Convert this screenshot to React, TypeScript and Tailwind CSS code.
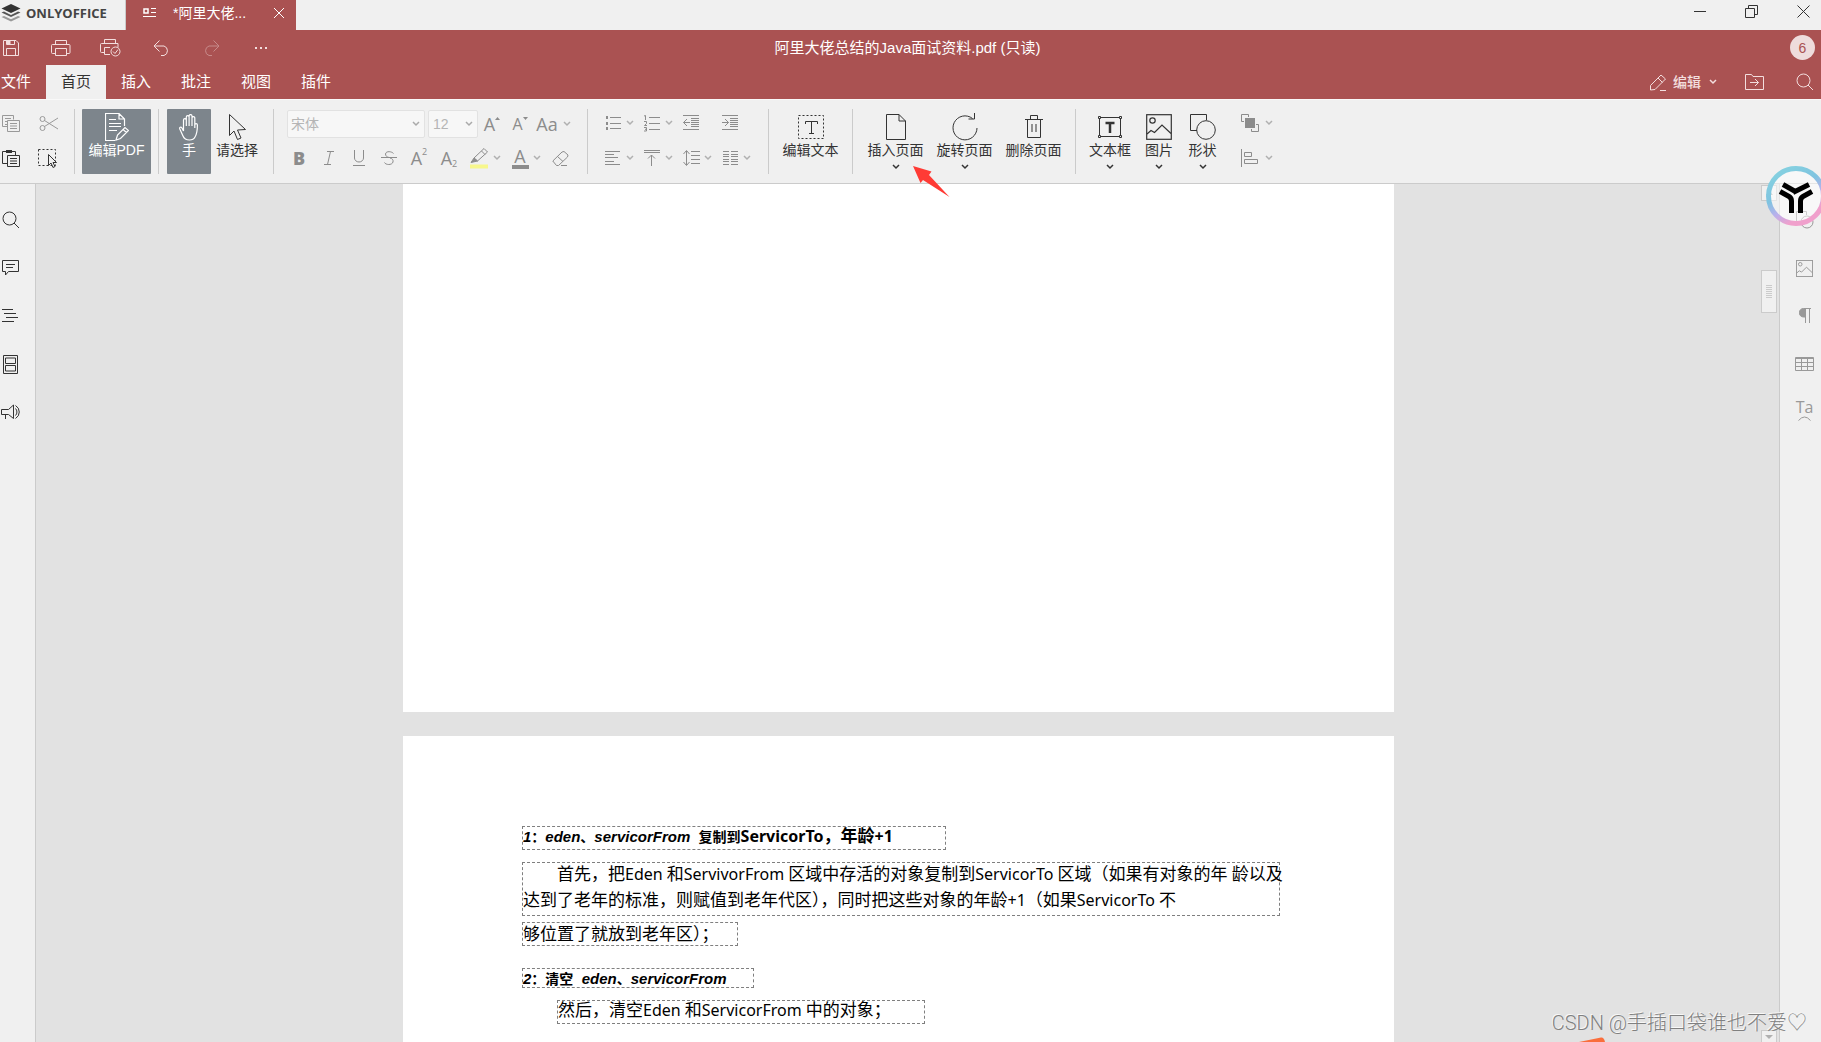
import React from "react";

type Kids = { children?: React.ReactNode };

function Svg({ w, h, children, sw = 1, className = "" }: Kids & { w: number; h: number; sw?: number; className?: string }) {
  return (
    <svg width={w} height={h} viewBox={`0 0 ${w} ${h}`} fill="none" stroke="currentColor" strokeWidth={sw} className={`shrink-0 ${className}`} aria-hidden="true">
      {children}
    </svg>
  );
}

const Chevron = ({ className = "" }: { className?: string }) => (
  <Svg w={8} h={6} sw={1.5} className={className}>
    <path d="M1 1l3 3 3-3" />
  </Svg>
);

const SearchIcon = () => (
  <Svg w={18} h={18}>
    <circle cx="7.5" cy="7.5" r="6.5" />
    <path d="M12 12l5 5" />
  </Svg>
);

const PictureIcon = ({ size = 26 }: { size?: number }) => (
  <svg width={size} height={size} viewBox="0 0 26 26" fill="none" stroke="currentColor" strokeWidth={size > 20 ? 1.2 : 1.5} aria-hidden="true">
    <rect x="0.7" y="0.7" width="24.6" height="24.6" />
    <circle cx="6.5" cy="6.5" r="2.7" />
    <path d="M1 20l4-3.500 3.500 2L16 11l9 8.500" />
  </svg>
);

function IconButton({ label, width = "w-5", children }: Kids & { label: string; width?: string }) {
  return (
    <button type="button" aria-label={label} className={`flex h-7 shrink-0 items-center justify-center ${width}`}>
      {children}
    </button>
  );
}

function ArrowButton({ label }: { label: string }) {
  return (
    <IconButton label={label} width="w-[14px]">
      <Chevron className="text-[#b0b0b0]" />
    </IconButton>
  );
}

function BigButton({ label, icon, active, arrow, width }: { label: string; icon: React.ReactNode; active?: boolean; arrow?: boolean; width: string }) {
  return (
    <button
      type="button"
      aria-pressed={active}
      className={`flex h-[65px] shrink-0 flex-col items-center pt-1 text-sm ${width} ${active ? "rounded-[1px] bg-[#7d858c] text-white" : "text-[#333]"}`}
    >
      <span className="flex h-7 items-center">{icon}</span>
      <span className="h-5 whitespace-nowrap leading-[19px]">{label}</span>
      {arrow && <Chevron className="mt-[3px]" />}
    </button>
  );
}

const Separator = () => <div className="h-[65px] w-px shrink-0 bg-[#cbcbcb]" />;

const PrintShape = () => <path d="M4.500 4V0.500H15.500V4M4.500 13.500H1.500a1 1 0 0 1-1-1V5.500a1 1 0 0 1 1-1H18a1 1 0 0 1 1 1v7a1 1 0 0 1-1 1H15.500M4.500 8.500H15.500V15.500H4.500z" />;

function TitleTabs() {
  return (
    <div className="flex h-[30px] bg-[#f0f0f0]">
      <div className="flex w-[126px] items-center border-r border-[#cbcbcb] pb-1">
        <svg width="20" height="18" viewBox="0 0 20 18" className="ml-[1px] shrink-0" aria-hidden="true">
          <path d="M10 0L19.500 4.500 10 9 0.500 4.500z" fill="#333" />
          <path d="M0.500 8.500L3 7.500 10 11l7-3.500 2.500 1L10 13z" fill="#555" />
          <path d="M0.500 13L3 12 10 15.300 17 12l2.500 1L10 17.500z" fill="#999" />
        </svg>
        <span className="ml-[5px] font-['Open_Sans'] text-[13px] font-bold leading-5 text-[#444]">ONLYOFFICE</span>
      </div>
      <div className="flex w-[170px] items-center bg-[#aa5252] pb-[5px] pl-[17px] pr-3 text-white">
        <Svg w={13} h={10}>
          <rect x="1" y="1" width="4" height="4" strokeWidth="1.500" />
          <path d="M8 0.500h5M8 4.500h5M0 8.500h13" />
        </Svg>
        <span className="ml-[17px] flex-1 text-sm leading-5">*阿里大佬...</span>
        <button type="button" aria-label="关闭标签">
          <Svg w={10} h={10}>
            <path d="M0 0l10 10M10 0L0 10" />
          </Svg>
        </button>
      </div>
      <div className="ml-auto flex gap-[39px] pr-[11px] pt-[5px] text-[#333]">
        <button type="button" aria-label="最小化" className="h-3">
          <Svg w={12} h={12}><path d="M0 6.500h12" /></Svg>
        </button>
        <button type="button" aria-label="还原" className="h-3">
          <Svg w={13} h={13}><path d="M0.500 3.500h9v9h-9zM3.500 3.500v-3h9v9h-3" /></Svg>
        </button>
        <button type="button" aria-label="关闭" className="h-3">
          <Svg w={13} h={13}><path d="M0.500 0.500l12 12M12.500 0.500l-12 12" /></Svg>
        </button>
      </div>
    </div>
  );
}

function QuickBar() {
  const quick = [
    { label: "保存", icon: <Svg w={16} h={16}><path d="M0.500 0.500H13L15.500 3V15.500H0.500zM3.500 15V8.500h9V15M3.500 0.500v4h8v-4" /><path d="M4 1h3v3H4z" fill="currentColor" /></Svg> },
    { label: "打印", icon: <Svg w={20} h={16}><PrintShape /></Svg> },
    { label: "快速打印", icon: <Svg w={22} h={18}><path d="M4.500 4V0.500H15.500V4M4.500 13.500H1.500a1 1 0 0 1-1-1V5.500a1 1 0 0 1 1-1H18v4M10 8.500H4.500V15.500H10" /><circle cx="15.500" cy="12.500" r="4.500" /><path d="M13 12.500l2 2 3-4" /></Svg> },
    { label: "撤销", icon: <Svg w={17} h={16}><path d="M6.500 0.500L1 6l5.500 5.500M1 6h10a5 5 0 0 1 0 9.500H8" /></Svg> },
    { label: "重做", icon: <Svg w={17} h={16} className="opacity-40"><path d="M10.500 0.500L16 6l-5.500 5.500M16 6H6a5 5 0 0 0 0 9.500h3" /></Svg> },
    { label: "更多", icon: <Svg w={12} h={2} sw={2}><path d="M0 1h2M5 1h2M10 1h2" /></Svg> },
  ];
  return (
    <div className="grid h-[35px] grid-cols-[1fr_auto_1fr] items-center pr-1.5">
      <div className="flex gap-7 text-[#f3dede]">
        {quick.map((q) => (
          <button key={q.label} type="button" aria-label={q.label} className="flex h-5 w-[22px] items-center justify-center">{q.icon}</button>
        ))}
      </div>
      <h1 className="text-[15px] leading-6 text-white">阿里大佬总结的Java面试资料.pdf (只读)</h1>
      <div className="ml-auto flex size-[25px] items-center justify-center rounded-full bg-[#eedcdc] text-sm leading-5 text-[#aa5252]">6</div>
    </div>
  );
}

function MenuBar() {
  return (
    <div className="flex h-[34px] text-[15px] leading-6 text-white">
      <button type="button" className="w-[46px] pr-[15px] text-right">文件</button>
      <button type="button" className="w-[60px] bg-[#f0f0f0] text-[#333]">首页</button>
      {["插入", "批注", "视图", "插件"].map((t) => (
        <button key={t} type="button" className="w-[60px]">{t}</button>
      ))}
      <div className="ml-auto flex items-center pr-[7px] text-[#f3dede]">
        <button type="button" className="flex items-center text-sm font-medium">
          <Svg w={17} h={17} className="mr-1.5">
            <path d="M0.500 11.500L11 1l4.500 4L5 15.500l-4.500 0.500zM8 4l4.500 4.500M10 16.500h6" />
          </Svg>
          编辑
          <Chevron className="ml-2" />
        </button>
        <button type="button" aria-label="打开文件位置" className="ml-7">
          <Svg w={19} h={16}>
            <path d="M0.500 0.500h6l1.500 2h10.500v13H0.500zM5 8.500h8.500M10 5l3.500 3.500L10 12" />
          </Svg>
        </button>
        <button type="button" aria-label="搜索" className="ml-8"><SearchIcon /></button>
      </div>
    </div>
  );
}

const rowsClass = "flex h-[65px] shrink-0 flex-col gap-[7px] text-[#8c8c8c]";

function ClipboardGroup() {
  return (
    <div className="grid h-[65px] w-[74px] shrink-0 grid-cols-[22px_24px] content-start gap-x-[14px] gap-y-[7px] text-[#333]">
      <IconButton label="复制" width="w-[22px] text-[#999]">
        <Svg w={18} h={17}><path d="M5 11.500H0.500V0.500h11v4M3 3.500h6M3 6.500h2.500M3 9.500h2M5.500 5.500h12v11h-12zM8 8.500h7M8 11h7M8 13.500h7" /></Svg>
      </IconButton>
      <IconButton label="剪切" width="w-6 text-[#999]">
        <Svg w={19} h={15}><circle cx="3.500" cy="3" r="2.500" /><circle cx="3.500" cy="12" r="2.500" /><path d="M5.500 4.500L19 13M5.500 10.500L19 2" /></Svg>
      </IconButton>
      <IconButton label="粘贴" width="w-[22px]">
        <Svg w={18} h={17}><path d="M5 13.500H0.500V1.500h13v4M5.500 5.500h12v11h-12zM8 8.500h7M8 11h7M8 13.500h7" /><path d="M4 1.500h6" strokeWidth="3" /></Svg>
      </IconButton>
      <IconButton label="全选" width="w-6">
        <Svg w={20} h={19}>
          <path d="M0.500 0.500h17v16h-17z" strokeDasharray="2 2" />
          <path d="M10.500 5.500v11l2.500-2.500 2 4.500 2-1-2-4h3.500z" fill="#f0f0f0" />
        </Svg>
      </IconButton>
    </div>
  );
}

function FontGroup() {
  return (
    <div className={`${rowsClass} ml-[10px] w-[303px]`}>
      <div className="flex h-7 items-center pl-[3px] pt-[2px]">
        <div className="relative">
          <select aria-label="字体" className="h-7 w-[138px] appearance-none rounded-[2px] border border-[#e2e2e2] bg-[#f7f7f7] px-[3px] text-sm text-[#b5b5b5]">
            <option>宋体</option>
          </select>
          <Chevron className="pointer-events-none absolute right-[5px] top-[11px] text-[#aaa]" />
        </div>
        <div className="relative ml-[3px]">
          <select aria-label="字号" className="h-7 w-[50px] appearance-none rounded-[2px] border border-[#e2e2e2] bg-[#f7f7f7] px-1 text-sm text-[#b5b5b5]">
            <option>12</option>
          </select>
          <Chevron className="pointer-events-none absolute right-[5px] top-[11px] text-[#aaa]" />
        </div>
        <IconButton label="增大字号" width="w-7">
          <span className="font-['Open_Sans'] text-lg leading-5">A</span>
          <Svg w={5} h={3} className="mb-3"><path d="M0 3L2.500 0 5 3z" fill="currentColor" stroke="none" /></Svg>
        </IconButton>
        <IconButton label="减小字号" width="w-7">
          <span className="font-['Open_Sans'] text-base leading-5">A</span>
          <Svg w={5} h={3} className="mb-3"><path d="M0 0L2.500 3 5 0z" fill="currentColor" stroke="none" /></Svg>
        </IconButton>
        <IconButton label="更改大小写" width="w-[26px]"><span className="font-['Open_Sans'] text-lg leading-5">Aa</span></IconButton>
        <ArrowButton label="大小写选项" />
      </div>
      <div className="flex h-7 items-center">
        <IconButton label="加粗" width="w-[30px]"><span className="font-['Open_Sans'] text-lg font-extrabold leading-5">B</span></IconButton>
        <IconButton label="斜体" width="w-[30px]"><Svg w={10} h={14}><path d="M3 0.500h7M0 13.500h7M6.500 0.500l-3 13" /></Svg></IconButton>
        <IconButton label="下划线" width="w-[30px]"><Svg w={12} h={16}><path d="M1.500 0v8a4.500 4 0 0 0 9 0V0M0 15.500h12" /></Svg></IconButton>
        <IconButton label="删除线" width="w-[30px]"><Svg w={16} h={14}><path d="M12.500 2.500C11 0.500 5 -0.500 4.500 3c0 2 1.500 3 3.500 3.500M9 7c2 0.500 3.500 1.500 3 4-1 3.500-7.500 3-8.500 0.500M0 6.500h16" /></Svg></IconButton>
        <IconButton label="上标" width="w-[30px]"><span className="font-['Open_Sans'] text-lg leading-5">A</span><span className="mb-3 font-['Open_Sans'] text-[9px] leading-3">2</span></IconButton>
        <IconButton label="下标" width="w-[30px]"><span className="font-['Open_Sans'] text-lg leading-5">A</span><span className="mt-3 font-['Open_Sans'] text-[9px] leading-3">2</span></IconButton>
        <IconButton label="突出显示颜色" width="ml-[6px] w-5">
          <Svg w={20} h={22}>
            <path d="M4 11L14 1.500l3.500 3.500L7.500 14zM11.500 4l3.500 3.500" />
            <path d="M4 11l3.500 3L1 15.500z" fill="currentColor" />
            <path d="M0 19.500h18" stroke="#f7f78c" strokeWidth="4" />
          </Svg>
        </IconButton>
        <ArrowButton label="突出显示选项" />
        <IconButton label="字体颜色" width="ml-[6px] w-5">
          <span className="flex w-[17px] flex-col items-center border-b-4 border-[#8c8c8c] font-['Open_Sans'] text-lg leading-[18px]">A</span>
        </IconButton>
        <ArrowButton label="字体颜色选项" />
        <IconButton label="清除样式" width="ml-1 w-6">
          <Svg w={17} h={15}><path d="M0.800 10L10 1l2-0.500L16 4l-0.500 2-9 8.500H4.500zM5.500 5.500l5.500 5M9 14.500h6" /></Svg>
        </IconButton>
      </div>
    </div>
  );
}

function ParagraphGroup() {
  const items = [
    { label: "项目符号", arrow: true, icon: <Svg w={16} h={16}><path d="M5 2.500h11M5 8.500h11M5 13.500h11" /><path d="M1 2.500h2M1 8.500h2M1 13.500h2" strokeWidth="3" /></Svg> },
    { label: "编号", arrow: true, icon: <Svg w={16} h={17}><path d="M5 2.500h11M5 8.500h11M5 14.500h11M0 1l1.500-.5V5M0 6.500h2.500v2L0.500 10.500H3M0 12.500h2.500v3.500H0M1 14.300h1.500" /></Svg> },
    { label: "减少缩进", icon: <Svg w={16} h={16}><path d="M0 0.500h16M8 3.500h8M8 5.500h8M8 7.500h8M8 9.500h8M8 11.500h8M0 14.500h16M0.500 7.500H7M4 4L0.500 7.500 4 11" /></Svg> },
    { label: "增加缩进", icon: <Svg w={16} h={16}><path d="M0 0.500h16M8 3.500h8M8 5.500h8M8 7.500h8M8 9.500h8M8 11.500h8M0 14.500h16M0 7.500h6.500M3 4l3.500 3.500L3 11" /></Svg> },
    { label: "水平对齐", arrow: true, icon: <Svg w={16} h={14}><path d="M0 0.500h15M0 3.500h9M0 6.500h13M0 10.500h9M0 13.500h15" /></Svg> },
    { label: "垂直对齐", arrow: true, icon: <Svg w={16} h={16}><path d="M0 0.500h16M0 2.500h16M7.500 16V5M4 8.500L7.500 5 11 8.500" /></Svg> },
    { label: "行间距", arrow: true, icon: <Svg w={17} h={16}><path d="M3.500 1v14M0.500 4l3-3.500 3 3.500M0.500 12l3 3.500 3-3.500M8 1.500h9M8 5.500h9M8 9.500h9M8 13.500h9" /></Svg> },
    { label: "分栏", arrow: true, icon: <Svg w={15} h={14}><path d="M0 0.500h6M0 3.500h6M0 5.500h6M0 8.500h6M0 10.500h6M0 13.500h6M8 0.500h7M8 3.500h7M8 5.500h7M8 8.500h7M8 10.500h7M8 13.500h7" /></Svg> },
  ];
  return (
    <div className="ml-[15px] grid h-[65px] w-[165px] shrink-0 grid-cols-[39px_39px_39px_39px] content-start gap-y-[7px] text-[#8c8c8c]">
      {items.map((it) => (
        <div key={it.label} className="flex">
          <IconButton label={it.label}>{it.icon}</IconButton>
          {it.arrow && <ArrowButton label={`${it.label}选项`} />}
        </div>
      ))}
    </div>
  );
}

function Toolbar() {
  return (
    <div className="flex h-[85px] shrink-0 border-b border-t border-b-[#cbcbcb] border-t-[#f9f9f9] bg-[#f0f0f0] pt-[9px]">
      <ClipboardGroup />
      <Separator />
      <div className="px-[7px]">
        <BigButton
          active
          label="编辑PDF"
          width="w-[69px]"
          icon={<Svg w={24} h={28} sw={1.2}><path d="M10 27.500H0.500V0.500H14l5.500 5.500v7M14 0.500V6h5.500M4 6.500h7M4 10.500h12M4 13.500h12M4 17.500h8M11 27l1.500-5L20 14.500l3.500 3L15.500 25.500zM18 16.500l3.500 3" /></Svg>}
        />
      </div>
      <Separator />
      <div className="flex gap-[1px] pl-2 pr-[11px]">
        <BigButton
          active
          label="手"
          width="w-[44px]"
          icon={<Svg w={20} h={27} sw={1.2}><path d="M4.500 15V6a1.400 1.400 0 0 1 2.800 0v6M7.300 12V3a1.400 1.400 0 0 1 2.800 0v9M10.100 12V2a1.400 1.400 0 0 1 2.900 0v10M13 12V4a1.400 1.400 0 0 1 2.800 0v10M15.800 14v-3a1.300 1.300 0 0 1 2.600 0c0 5-0.500 9-2.400 12-1 2-3 3-5.500 3-3.500 0-5.500-1.500-6.500-4L0.800 15c-.6-1.700 1.200-2.500 2-1.200L4.500 17v-2" /></Svg>}
        />
        <BigButton
          label="请选择"
          width="w-[50px]"
          icon={<Svg w={18} h={28}><path d="M1.500 1.500v21l4.500-4.500 3.500 8.500 3.500-1.500-3.500-8 8-0.500z" /></Svg>}
        />
      </div>
      <Separator />
      <FontGroup />
      <Separator />
      <ParagraphGroup />
      <Separator />
      <div className="px-[11px]">
        <BigButton
          label="编辑文本"
          width="w-[61px]"
          icon={<Svg w={26} h={24}><path d="M0.500 0.500h25v23h-25z" strokeDasharray="2 2" /><path d="M7.500 9V6.500h12V9M13.500 6.500v12M11 18.500h5" /></Svg>}
        />
      </div>
      <Separator />
      <div className="flex gap-2 pl-3 pr-[11px]">
        <BigButton arrow label="插入页面" width="w-[61px]" icon={<Svg w={20} h={26}><path d="M0.500 0.500H13L19.500 7V25.500H0.500zM13 0.500V7h6.500" /></Svg>} />
        <BigButton arrow label="旋转页面" width="w-[61px]" icon={<Svg w={26} h={28}><path d="M25 15a12 12 0 1 1-4.500-9.500M22.500 0v6h-6" /></Svg>} />
        <BigButton label="删除页面" width="w-[61px]" icon={<Svg w={18} h={24}><path d="M0 4.500h18M5.500 4.500v-4h7v4M2.500 4.500v18h13v-18M7 9v8M11 9v8" /></Svg>} />
      </div>
      <Separator />
      <div className="flex pl-[9px]">
        <BigButton
          arrow
          label="文本框"
          width="w-[50px]"
          icon={<Svg w={24} h={24}><path d="M1.500 2.500h21v19h-21z" /><path d="M0.500 1.500h2v2h-2zM21.500 1.500h2v2h-2zM0.500 20.500h2v2h-2zM21.500 20.500h2v2h-2z" fill="#f0f0f0" /><path d="M7.500 8h9M12 8v10" strokeWidth="2.500" /></Svg>}
        />
        <BigButton arrow label="图片" width="w-[48px]" icon={<PictureIcon />} />
        <BigButton arrow label="形状" width="w-[39px]" icon={<Svg w={26} h={26}><path d="M7 16.500H0.500v-16h16V6" /><circle cx="16" cy="16" r="9.300" /></Svg>} />
      </div>
      <div className={`${rowsClass} ml-[18px]`}>
        <div className="flex gap-0.5">
          <IconButton label="排列"><Svg w={18} h={18}><path d="M3 7.500H0.500v-7h7V3M15 10.500h2.500v7h-7V15" /><path d="M4 4h10v10H4z" fill="currentColor" stroke="none" /></Svg></IconButton>
          <ArrowButton label="排列选项" />
        </div>
        <div className="flex gap-0.5">
          <IconButton label="对齐"><Svg w={18} h={18}><path d="M0.500 0v18M3.500 3.500h7v4h-7zM3.500 10.500h13v4h-13z" /></Svg></IconButton>
          <ArrowButton label="对齐选项" />
        </div>
      </div>
    </div>
  );
}

function SideButton({ label, children }: Kids & { label: string }) {
  return (
    <button type="button" aria-label={label} className="flex h-12 w-[21px] shrink-0 items-center justify-center">{children}</button>
  );
}

const Cjk = ({ children }: Kids) => <span className="text-[17px]">{children}</span>;

const boxClass = "whitespace-nowrap border border-dashed border-[#7f7f7f]";
const headClass = "font-['Liberation_Sans','Noto_Sans_CJK_SC',sans-serif] text-[15px] font-bold italic";
const upright = "text-sm not-italic";

function DocumentPages() {
  return (
    <main className="flex min-w-0 flex-1 flex-col items-center gap-6 overflow-hidden bg-[#e2e2e2]">
      <section aria-label="第一页" className="h-[528px] w-full max-w-[991px] shrink-0 bg-white" />
      <section aria-label="第二页" className="w-full max-w-[991px] flex-1 bg-white pl-[119px] pt-[90px] font-['Noto_Sans','Noto_Sans_CJK_SC',sans-serif] text-base text-black">
        <h2 className={`${boxClass} ${headClass} h-6 w-[424px] leading-[16px]`}>
          1<span className={upright}>：</span>eden<span className={upright}>、</span>servicorFrom&nbsp; <span className={upright}>复制到</span>
          <span className="font-['Noto_Sans','Noto_Sans_CJK_SC',sans-serif] text-base not-italic leading-[16px]">ServicorTo<Cjk>，年龄</Cjk>+1</span>
        </h2>
        <p className={`${boxClass} mt-3 h-[54px] w-[758px]`}>
          <span className="block pl-[34px] leading-[22px]"><Cjk>首先，把</Cjk>Eden <Cjk>和</Cjk>ServivorFrom <Cjk>区域中存活的对象复制到</Cjk>ServicorTo <Cjk>区域（如果有对象的年</Cjk> <Cjk>龄以及</Cjk></span>
          <span className="block leading-[30px]"><Cjk>达到了老年的标准，则赋值到老年代区），同时把这些对象的年龄</Cjk>+1<Cjk>（如果</Cjk>ServicorTo <Cjk>不</Cjk></span>
        </p>
        <p className={`${boxClass} mt-1.5 h-6 w-[216px] leading-[22px]`}><Cjk>够位置了就放到老年区）；</Cjk></p>
        <h2 className={`${boxClass} ${headClass} mt-[22px] h-5 w-[232px] leading-[17px]`}>
          2<span className={upright}>：清空</span>&nbsp; eden<span className={upright}>、</span>servicorFrom
        </h2>
        <p className={`${boxClass} ml-[35px] mt-3 h-6 w-[368px] leading-[18px]`}>
          <Cjk>然后，清空</Cjk>Eden <Cjk>和</Cjk>ServicorFrom <Cjk>中的对象；</Cjk>
        </p>
      </section>
    </main>
  );
}

export default function App() {
  return (
    <div lang="zh-CN" className="relative flex h-screen flex-col overflow-hidden bg-[#f0f0f0] font-['Liberation_Sans','Noto_Sans_CJK_SC',sans-serif]">
      <header className="shrink-0">
        <TitleTabs />
        <div className="bg-[#aa5252]">
          <QuickBar />
          <MenuBar />
        </div>
      </header>
      <Toolbar />
      <div className="flex min-h-0 flex-1">
        <nav aria-label="左侧面板" className="flex w-9 shrink-0 flex-col border-r border-[#cbcbcb] pt-3 text-[#333]">
          <SideButton label="查找"><SearchIcon /></SideButton>
          <SideButton label="批注"><Svg w={17} h={16}><path d="M0.500 0.500h16v11H6.500L3.500 15v-3.500h-3zM4 4.500h9M4 7.500h7" /></Svg></SideButton>
          <SideButton label="标题"><Svg w={17} h={14}><path d="M0 0.500h11M2 4.500h12M4 8.500h12M0 12.500h12" /></Svg></SideButton>
          <SideButton label="缩略图"><Svg w={15} h={19}><path d="M0.500 0.500h14v18h-14zM2.500 3h10v5.500h-10zM2.500 10.500h10v5.500h-10z" /></Svg></SideButton>
          <SideButton label="反馈与支持"><Svg w={20} h={16}><path d="M0.500 5.500h7L12.500 1v13.500L7.500 10.500h-7zM4.500 10.500V15M14.500 4.500a5 5 0 0 1 0 7M14.500 1.500a7.500 7.500 0 0 1 0 13" /></Svg></SideButton>
        </nav>
        <DocumentPages />
        <div aria-hidden="true" className="flex w-[18px] shrink-0 flex-col bg-[#e2e2e2] pr-0.5 pt-[1px] text-[#b0b0b0]">
          <div className="flex h-4 items-center justify-center border border-[#cbcbcb] bg-[#f0f0f0]"><Svg w={7} h={4}><path d="M0 4L3.500 0 7 4z" fill="currentColor" stroke="none" /></Svg></div>
          <div className="mt-[69px] flex h-[43px] items-center justify-center border border-[#cbcbcb] bg-[#f0f0f0]">
            <Svg w={6} h={14} className="text-[#cbcbcb]"><path d="M0 0.500h6M0 2.500h6M0 4.500h6M0 6.500h6M0 8.500h6M0 10.500h6M0 12.500h6" /></Svg>
          </div>
          <div className="mt-auto flex h-3 items-center justify-center border border-b-0 border-[#cbcbcb] bg-[#f0f0f0]"><Svg w={8} h={4}><path d="M0 0h8L4 4z" fill="currentColor" stroke="none" /></Svg></div>
        </div>
        <nav aria-label="右侧面板" className="flex w-[42px] shrink-0 flex-col border-l border-[#cbcbcb] pl-[14px] pt-3 text-[#999]">
          <SideButton label="形状设置"><Svg w={18} h={18}><path d="M5 10.500H0.500v-10h10V4" /><circle cx="11" cy="11" r="6" /></Svg></SideButton>
          <SideButton label="图片设置"><PictureIcon size={17} /></SideButton>
          <SideButton label="段落设置"><Svg w={12} h={16}><path d="M5 0.500h7M6.500 0.500V15M10.500 0.500V15" /><path d="M6.500 0.500H4.500a4 4 0 0 0 0 8.500h2z" fill="currentColor" /></Svg></SideButton>
          <SideButton label="表格设置"><Svg w={19} h={14}><path d="M0.500 0.500h18v13H0.500zM0 1.500h19M0 5.500h19M0 9.500h19M6.500 1v13M12.500 1v13" /></Svg></SideButton>
          <SideButton label="艺术字设置">
            <span className="flex flex-col items-center pb-1 font-['Open_Sans'] text-base leading-[17px]">Ta<Svg w={13} h={5}><path d="M0.500 4.500Q6.500 -2.500 12.500 4.500" /></Svg></span>
          </SideButton>
        </nav>
      </div>

      <svg className="pointer-events-none absolute left-[913px] top-[166px]" width="37" height="32" viewBox="0 0 37 32" aria-hidden="true">
        <path d="M0 0L18.500 5.500 16 9 36.500 31 10 14 7.500 17z" fill="#ff3b35" />
      </svg>

      <div className="pointer-events-none absolute right-[-5px] top-[166px]">
        <svg width="60" height="60" viewBox="0 0 60 60" fill="none" aria-hidden="true">
          <defs>
            <linearGradient id="ring" x1="0.200" y1="0.100" x2="0.700" y2="1">
              <stop offset="0" stopColor="#84cfe0" />
              <stop offset="0.350" stopColor="#7fc3e0" />
              <stop offset="0.600" stopColor="#b9b0ec" />
              <stop offset="0.850" stopColor="#f0a0cc" />
            </linearGradient>
          </defs>
          <circle cx="30" cy="30" r="27.500" fill="#fff" fillOpacity="0.500" stroke="url(#ring)" strokeWidth="5" />
          <g stroke="#000" strokeWidth="5">
            <path d="M17 18.500l11.500 6.500" />
            <path d="M27 26.500L43 18.500" />
            <path d="M14 25.500l9 5q2.500 1.500 2.500 4.500v12" />
            <path d="M34.500 47V35q0-3 2.500-4.500l9-5" />
          </g>
        </svg>
      </div>

      <div className="pointer-events-none absolute bottom-0 right-[215px]">
        <Svg w={27} h={5}><path d="M0 5L22 0.500q3-.5 4 4.500z" fill="#fa6e3c" stroke="none" /></Svg>
      </div>
      <p className="pointer-events-none absolute bottom-1 right-[14px] font-['Roboto','Noto_Sans_CJK_SC',sans-serif] text-xl font-light leading-[30px] text-[#808080] [text-shadow:-1px_-1px_0_#f8f8f8]">CSDN @手插口袋谁也不爱♡</p>
    </div>
  );
}
